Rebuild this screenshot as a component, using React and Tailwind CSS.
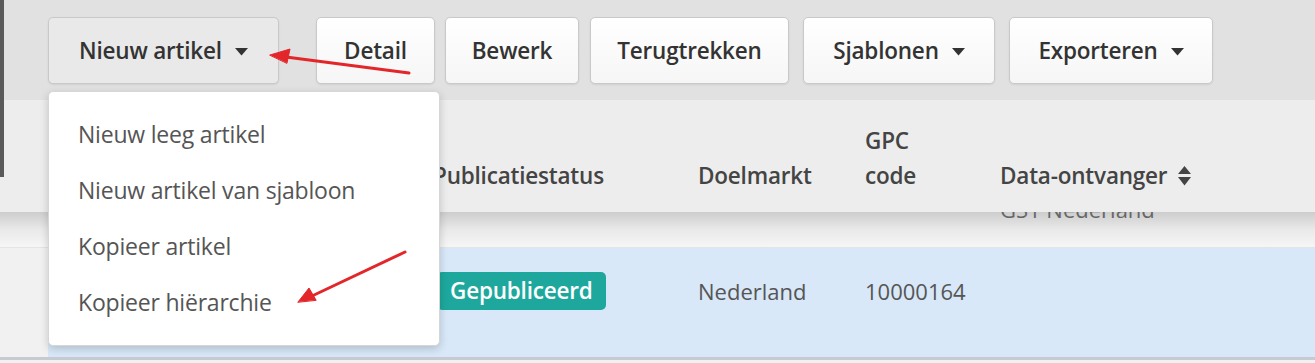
import React from "react";

const BUTTONS = [
  { label: "Nieuw artikel", w: "w-[231px]", ml: "ml-0", caret: true, active: true },
  { label: "Detail", w: "w-[119px]", ml: "ml-[37px]" },
  { label: "Bewerk", w: "w-[134px]", ml: "ml-[10px]" },
  { label: "Terugtrekken", w: "w-[199px]", ml: "ml-[11px]" },
  { label: "Sjablonen", w: "w-[192px]", ml: "ml-[14px]", caret: true },
  { label: "Exporteren", w: "w-[204px]", ml: "ml-[14px]", caret: true },
];

const MENU = [
  "Nieuw leeg artikel",
  "Nieuw artikel van sjabloon",
  "Kopieer artikel",
  "Kopieer hiërarchie",
];

function Caret() {
  return (
    <svg width="13" height="8" viewBox="0 0 13 8" className="ml-[13px] mt-[2px]">
      <path d="M0 0h13L6.5 7.5z" fill="#333" />
    </svg>
  );
}

function SortIcon() {
  return (
    <svg width="13" height="20" viewBox="0 0 13 20" className="ml-[11px]">
      <path d="M6.5 0L13 8H0z" fill="#444" />
      <path d="M0 11h13L6.5 19.5z" fill="#444" />
    </svg>
  );
}

export default function App() {
  return (
    <div className="relative w-[1315px] h-[363px] overflow-hidden bg-[#f1f1f1] font-['Open_Sans','Liberation_Sans',sans-serif]">
      {/* Toolbar */}
      <div className="h-[100px] bg-[#e1e1e1] border-l-4 border-[#5a5a5a] pl-[44px] pt-[17px] flex items-start">
        {BUTTONS.map((b) => (
          <button
            key={b.label}
            className={`${b.w} ${b.ml} h-[67px] flex items-center justify-center rounded-[5px] border border-[#c9c9c9] text-[22.5px] font-semibold tracking-[-0.2px] text-[#333] shadow-[0_1px_2px_rgba(0,0,0,0.08)] ${
              b.active ? "bg-[#e9e9e9]" : "bg-gradient-to-b from-white to-[#f6f6f6]"
            }`}
          >
            {b.label}
            {b.caret && <Caret />}
          </button>
        ))}
      </div>

      {/* Table header */}
      <div className="h-[112px] bg-[#ededed] flex text-[22.5px] font-semibold tracking-[-0.2px] text-[#444]">
        <div className="w-[433px] shrink-0">
          <div className="w-1 h-[77px] bg-[#5a5a5a]" />
        </div>
        <div className="w-[265px] shrink-0 flex items-end pb-[19px] leading-[35px]">Publicatiestatus</div>
        <div className="w-[167px] shrink-0 flex items-end pb-[19px] leading-[35px]">Doelmarkt</div>
        <div className="w-[135px] shrink-0 flex items-end pb-[19px] leading-[35px]">
          GPC
          <br />
          code
        </div>
        <div className="flex-1 flex items-end pb-[19px] leading-[35px]">
          <span>Data-ontvanger</span>
          <span className="h-[35px] flex items-center">
            <SortIcon />
          </span>
        </div>
      </div>

      {/* Scrolled row under sticky header */}
      <div className="h-[36px] bg-gradient-to-b from-[#cdcdcd] via-[#e9e9e9] to-[#f6f6f6] border-b border-[#e4e4e4] flex overflow-hidden text-[22px] text-[#666]">
        <div className="w-[1000px] shrink-0" />
        <div className="-mt-[17px] leading-[28px]">GS1 Nederland</div>
      </div>

      {/* Selected row */}
      <div className="h-[112px] flex text-[22px] text-[#555] border-b-[3px] border-[#c5cbd1]">
        <div className="w-[48px] shrink-0 bg-[#f1f1f1]" />
        <div className="flex-1 flex items-start pt-[24px] bg-[#d8e8f8]">
          <div className="w-[389px] shrink-0" />
          <div className="w-[261px] shrink-0 h-[38px] flex items-center">
            <span className="h-[38px] px-[13px] flex items-center rounded-[5px] bg-[#1ea89d] text-white font-semibold text-[22.5px] tracking-[-0.2px]">
              Gepubliceerd
            </span>
          </div>
          <div className="w-[167px] shrink-0 h-[38px] flex items-center">Nederland</div>
          <div className="w-[135px] shrink-0 h-[38px] flex items-center">10000164</div>
        </div>
      </div>

      {/* Dropdown menu */}
      <div className="absolute left-[48px] top-[91px] w-[392px] h-[255px] bg-white rounded-[5px] border border-[#d6d6d6] shadow-[0_3px_8px_rgba(0,0,0,0.18)] pt-[14px] pl-[29px]">
        {MENU.map((m) => (
          <div key={m} className="h-[56px] flex items-center text-[23px] tracking-[-0.2px] text-[#555]">
            {m}
          </div>
        ))}
      </div>

      {/* Annotation arrows */}
      <svg className="absolute inset-0 pointer-events-none" width="1315" height="363">
        <g stroke="#e3262a" strokeWidth="3" strokeLinecap="round" fill="#e3262a">
          <line x1="409" y1="73" x2="286" y2="57" />
          <path d="M270 55L290 49L287 63Z" strokeWidth="1" />
          <line x1="405" y1="252" x2="312" y2="296" />
          <path d="M298 302L309 288L316 300Z" strokeWidth="1" />
        </g>
      </svg>
    </div>
  );
}
